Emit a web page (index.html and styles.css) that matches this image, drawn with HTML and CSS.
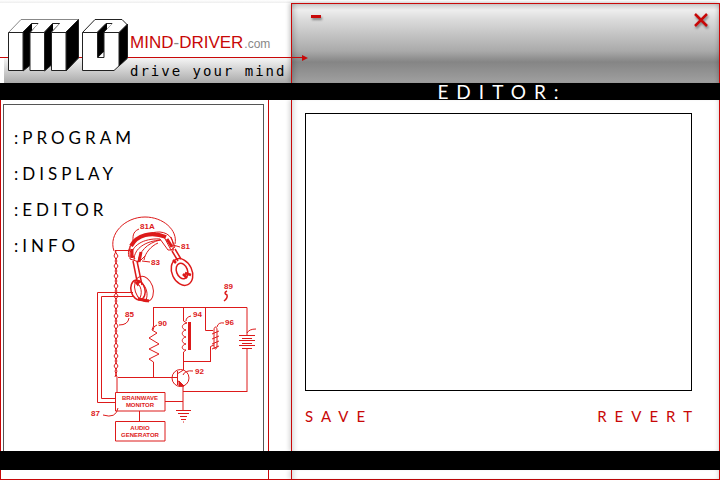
FILE: index.html
```html
<!DOCTYPE html>
<html lang="en">
<head>
<meta charset="utf-8">
<title>Mind-Driver.com - Editor</title>
<link rel="stylesheet" href="styles.css">
</head>
<body>
<div class="app">
  <header class="header">
    <div class="brand">
      <svg class="brand-mark" viewBox="0 18 130 65" aria-hidden="true">
        <g fill="#fff" stroke="#222" stroke-width="1" stroke-linejoin="round">
          <path d="M8.500 32.500L21 19.500H78.500L66 32.500Z" stroke="#888"/>
          <path d="M23 32L31.500 23.500H38L30.500 32V65L23 71Z" fill="#000"/>
          <path d="M44.500 32L52.500 23.500H59.500L51.500 32V65L44.500 71Z" fill="#000"/>
          <path d="M66 32L78.500 19.500V58L66 71Z" fill="#000"/>
          <path d="M8.500 32.500H23V70.500H8.500ZM30 32.500H44.500V70.500H30ZM51.500 32.500H66V70.500H51.500Z"/>
          <path d="M32 24H38L32 30ZM53 24H59L53 30Z" stroke="none"/>
          <path d="M82.500 32.500L95 19.500H122L127.500 25V58L114 70.500H82.500Z"/>
          <path d="M119 32.500L127.500 24V58L119 66Z" fill="#000"/>
          <path d="M82.500 32.500H119" fill="none"/>
          <path d="M97.500 32L106 23.500H112L104 32V57.500H97.500Z" fill="#000"/>
          <path d="M107 24H112L107 29ZM98.500 57L103.500 52V57Z" stroke="none"/>
        </g>
      </svg>
      <div class="brand-text">
        <div class="brand-name"><span class="brand-main">MIND<span class="dash">-</span>DRIVER</span><span class="brand-tld">.com</span></div>
        <div class="tagline">drive your mind</div>
      </div>
    </div>
    <div class="titlebar">
      <button class="win-btn" type="button" aria-label="Minimize">
        <svg width="14" height="14" viewBox="0 0 14 14"><path d="M2 4.500H12" stroke="#c80808" stroke-width="3"/></svg>
      </button>
      <button class="win-btn" type="button" aria-label="Close">
        <svg width="16" height="16" viewBox="0 0 16 16"><path d="M2 2L14 14M14 2L2 14" stroke="#c80808" stroke-width="2.500"/></svg>
      </button>
    </div>
    <div class="arrow"></div>
  </header>

  <div class="bar bar-title"><h1>EDITOR:</h1></div>

  <div class="content">
    <aside class="side">
      <div class="side-box">
        <nav class="menu">
          <a href="#program">:PROGRAM</a>
          <a href="#display">:DISPLAY</a>
          <a href="#editor">:EDITOR</a>
          <a href="#info">:INFO</a>
        </nav>
        <svg class="schematic" viewBox="83 213 180 238" fill="none" stroke="#dd1a1a" stroke-width="1" aria-hidden="true">
          <!-- headset -->
          <path d="M114 251C108 234 125 217 145 217C163 217 178 230 175 244M115 250.500H130"/>
          <path d="M129 257C125 244 142 232 160 232C171 233 174 241 173 250"/>
          <path d="M131 246C137 235 151 231 166 237" stroke-width="4"/>
          <path d="M131 257C131 246 143 238 160 239M134 260C134 248 146 241 161 240M138 262C139 252 147 243 160 240M144 260C145 253 151 246 158 243"/>
          <path d="M130 246V259L139 262L145 256M129 249L135 259M163 235L171 250L175 247L171 237M160 239L168 250H174"/>
          <path d="M132 249V258M141 252L139 262M167 239L172 247" stroke-width="3"/>
          <path d="M133 261L138 286M137 261L142 285M172 251L178 261M175 249L181 259" stroke-width="1.500"/>
          <ellipse cx="182" cy="272" rx="10" ry="14" transform="rotate(-25 182 272)" stroke-width="1.500"/>
          <ellipse cx="182" cy="271" rx="5.500" ry="8" transform="rotate(-20 182 271)" stroke-width="1.500"/>
          <path d="M183 274L187 278M173 260L176 263M185 273L191 275" stroke-width="2.500"/>
          <ellipse cx="144" cy="289" rx="9" ry="13" transform="rotate(-18 144 289)"/>
          <ellipse cx="138" cy="290" rx="7" ry="10" transform="rotate(-15 138 290)" stroke-width="1.500"/>
          <path d="M137 283C143 287 142 298 138 300M143 284C148 290 148 297 145 302M133 281L137 284"/>
          <path d="M138 299L149 301M136 284L140 281" stroke-width="3"/>
          <path d="M139 229C132 232 133 237 133 243M173 245L180 247M142 261L150 262"/>
          <!-- twisted lead -->
          <path d="M115 251L118 256L115 261L118 266L115 271L118 276L115 281L118 286L115 291L118 296L115 301L118 306L115 311L118 316L115 321L118 326L115 331L118 336L115 341L118 346L115 351L118 356L115 361L118 366L115 371L117 377V392"/>
          <path d="M116 251L114 256L117 261L114 266L117 271L114 276L117 281L114 286L117 291L114 296L117 301L114 306L117 311L114 316L117 321L114 326L117 331L114 336L117 341L114 346L117 351L114 356L117 361L114 366L117 371L115 377"/>
          <path d="M133 292.500H97.500V402.500H115M133 296.500H101.500V398.500H115"/>
          <!-- circuit -->
          <path d="M153.500 377V362L149 359L159 354L149 349L159 344L149 338L157 333L152 330L153.500 326V308M153 307.500H247V335M247 348V392M118 377.500H177M183 391.500H247M183.500 308V321L187 323C181 324 181 329 186 330C181 331 181 336 186 337C181 338 181 343 186 344C181 345 181 350 186 350L183.500 352V370L177 374M177.500 371V385M177 380L183 385V410"/>
          <path d="M189.500 322V350" stroke-width="3"/>
          <path d="M205.500 308V330.500H213M210.500 362V346.500L214 345M210 361.500H183"/>
          <path d="M214 330C214 326 217 326 217 330V346C217 350 214 350 214 346ZM212 334L219 331M212 339L219 336M212 344L219 341M212 349L219 346"/>
          <circle cx="180.500" cy="378" r="8.500"/>
          <path d="M179 381L184 386L179 386Z" fill="#dd1a1a"/>
          <path d="M239 335.500H255M242 338.500H252M239 340.500H255M242 343.500H252M239 345.500H255M242 348.500H252M247 333Q249 329 256 329"/>
          <path d="M165 401.500H183M139.500 411V422M176 410.500H191M178 413.500H189M180 416.500H187M181 419.500H186M183 422H184"/>
          <path d="M115.500 392.500H165V411H115.500ZM115.500 421.500H165V441H115.500Z"/>
          <path d="M129 318Q128 325 119 325M157 325Q153 326 153 330M191 316Q186 317 186 321M224 323Q218 322 217 327M193 371Q185 370 183 375M103 415Q116 419 118 408"/>
          <path d="M227 291Q223 293 227 295Q228 298 224 301" stroke-width="1.500"/>
          <g class="labels">
            <text x="140" y="229">81A</text><text x="181" y="249">81</text><text x="151" y="265">83</text>
            <text x="125" y="317">85</text><text x="158" y="326">90</text><text x="193" y="317">94</text>
            <text x="225" y="325">96</text><text x="195" y="374">92</text><text x="91" y="416">87</text><text x="224" y="289">89</text>
          </g>
          <g class="box-labels">
            <text x="140" y="400">BRAINWAVE</text><text x="140" y="407">MONITOR</text>
            <text x="140" y="430">AUDIO</text><text x="140" y="437">GENERATOR</text>
          </g>
        </svg>
      </div>
    </aside>
    <main class="panel">
      <textarea class="editor" aria-label="Editor"></textarea>
      <div class="actions">
        <button class="action" type="button">SAVE</button>
        <button class="action" type="button">REVERT</button>
      </div>
    </main>
  </div>

  <div class="bar bar-bottom"></div>
  <footer class="footer"><div class="side"></div><div class="panel-end"></div></footer>
</div>
</body>
</html>
```
FILE: styles.css
```css
* { box-sizing: border-box; }

body {
  margin: 0;
  background: #fff;
  color: #000;
  font-family: Lato, sans-serif;
}

.app {
  min-height: 100vh;
  display: grid;
  grid-template-rows: 83px 17px 1fr 19px 10px;
}

.header,
.content,
.footer {
  display: grid;
  grid-template-columns: 291px 1fr;
}

.header {
  position: relative;
  padding-top: 3px;
  background: linear-gradient(#fff, #eee) top / 100% 3px no-repeat;
}

/* Brand */
.brand {
  display: flex;
  align-items: flex-end;
  background: linear-gradient(#f5f5f5, #aaa) 4px 100% / 100% 25px no-repeat;
}

.brand-mark {
  position: relative;
  z-index: 2;
  flex: none;
  width: 130px;
  height: 65px;
}

.brand-name {
  display: flex;
  align-items: baseline;
  gap: 1px;
  padding-bottom: 1px;
  line-height: 20px;
  font-family: "Liberation Sans", sans-serif;
  white-space: nowrap;
}

.brand-main {
  color: #c80808;
  font-size: 17px;
}

.dash,
.brand-tld { color: #888; }

.brand-tld { font-size: 12px; }

.tagline {
  padding: 6px 0 2px;
  font-family: "DejaVu Sans Mono", monospace;
  font-size: 14px;
  line-height: 20px;
  letter-spacing: 2px;
  white-space: nowrap;
}

.arrow {
  position: absolute;
  left: 0;
  top: 57px;
  width: 302px;
  height: 1px;
  background: #c80808;
}

.arrow::after {
  content: "";
  position: absolute;
  left: 100%;
  top: -2px;
  border: solid transparent;
  border-width: 3px 0 3px 6px;
  border-left-color: #c80808;
}

/* Window title bar */
.titlebar {
  display: flex;
  justify-content: space-between;
  align-items: flex-start;
  padding: 7px 9px 0 16px;
  border: 1px solid #c80808;
  border-bottom: 0;
  background: linear-gradient(#ccc 0, #eee 6px, #dcdcdc 15px, #aaa 47px, #858585 58px, #a0a0a0 79px);
  box-shadow: inset 5px 0 5px -3px rgba(0, 0, 0, 0.2), inset -4px 0 4px -3px rgba(0, 0, 0, 0.2), -2px 0 4px rgba(0, 0, 0, 0.2);
}

.win-btn {
  display: flex;
  padding: 1px;
  border: 0;
  background: none;
  filter: drop-shadow(1px 2px 1px rgba(0, 0, 0, 0.4));
}

/* Black bars */
.bar {
  position: relative;
  z-index: 1;
  background: #000;
}

.bar-title {
  padding: 0 7px 0 291px;
  color: #fff;
  text-align: center;
}

.bar-title h1 {
  margin: 0;
  font-size: 19px;
  font-weight: 400;
  line-height: 17px;
  letter-spacing: 8px;
}

/* Sidebar */
.side {
  display: grid;
  width: 269px;
  border: solid #c80808;
  border-width: 0 1px;
}

.content .side { padding: 4px 4px 0 2px; }

.side-box {
  display: grid;
  border: 1px solid #555;
  border-bottom: 0;
}

.menu,
.schematic { grid-area: 1 / 1; }

.menu {
  position: relative;
  z-index: 1;
  justify-self: start;
  display: flex;
  flex-direction: column;
  padding: 15px 0 0 10px;
}

.menu a {
  color: #000;
  font-size: 17px;
  line-height: 36px;
  letter-spacing: 4px;
  text-decoration: none;
}

.schematic {
  align-self: end;
  justify-self: end;
  width: 180px;
  height: 238px;
}

.labels,
.box-labels {
  fill: #dd1a1a;
  stroke: none;
  font-family: "Liberation Sans", sans-serif;
  font-weight: 700;
}

.labels { font-size: 8px; }

.box-labels {
  font-size: 6px;
  text-anchor: middle;
}

/* Editor panel */
.panel,
.panel-end {
  border: solid #c80808;
  border-width: 0 1px;
  box-shadow: inset 5px 0 5px -3px rgba(0, 0, 0, 0.15), inset -4px 0 4px -3px rgba(0, 0, 0, 0.15), -2px 0 4px rgba(0, 0, 0, 0.15);
}

.panel {
  display: flex;
  flex-direction: column;
  padding: 13px 27px 24px 13px;
}

.editor {
  flex: 1;
  width: 100%;
  padding: 8px;
  border: 1px solid #000;
  border-radius: 0;
  background: #fff;
  font: 14px/20px Lato, sans-serif;
  resize: none;
  outline: 0;
}

.actions {
  display: flex;
  justify-content: space-between;
  padding-top: 14px;
}

.action {
  padding: 0;
  border: 0;
  background: none;
  color: #c80808;
  font: 15px/22px Lato, sans-serif;
  letter-spacing: 8px;
}

.action:last-child { margin-right: -8px; }

.footer { border-bottom: 1px solid #c80808; }
```
